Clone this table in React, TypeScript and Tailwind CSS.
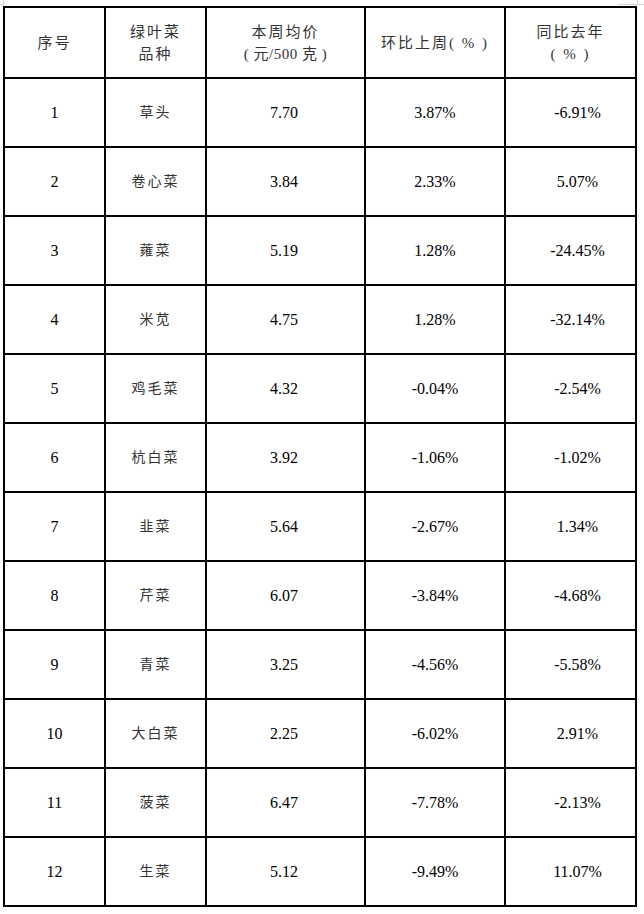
import React from 'react'

type Row = {
  no: string
  name: string
  price: string
  wow: string
  yoy: string
}

const rows: Row[] = [
  { no: '1', name: '草头', price: '7.70', wow: '3.87%', yoy: '-6.91%' },
  { no: '2', name: '卷心菜', price: '3.84', wow: '2.33%', yoy: '5.07%' },
  { no: '3', name: '蕹菜', price: '5.19', wow: '1.28%', yoy: '-24.45%' },
  { no: '4', name: '米苋', price: '4.75', wow: '1.28%', yoy: '-32.14%' },
  { no: '5', name: '鸡毛菜', price: '4.32', wow: '-0.04%', yoy: '-2.54%' },
  { no: '6', name: '杭白菜', price: '3.92', wow: '-1.06%', yoy: '-1.02%' },
  { no: '7', name: '韭菜', price: '5.64', wow: '-2.67%', yoy: '1.34%' },
  { no: '8', name: '芹菜', price: '6.07', wow: '-3.84%', yoy: '-4.68%' },
  { no: '9', name: '青菜', price: '3.25', wow: '-4.56%', yoy: '-5.58%' },
  { no: '10', name: '大白菜', price: '2.25', wow: '-6.02%', yoy: '2.91%' },
  { no: '11', name: '菠菜', price: '6.47', wow: '-7.78%', yoy: '-2.13%' },
  { no: '12', name: '生菜', price: '5.12', wow: '-9.49%', yoy: '11.07%' },
]

const cell = 'border-r-2 border-b-2 border-black flex items-center justify-center'
const cjk = "font-['Liberation_Serif','Noto_Sans_CJK_SC',serif] text-[14px] tracking-[2px] text-[#333]"
const num = "font-['Liberation_Serif','Noto_Sans_CJK_SC',serif] text-[16px] text-black"
const head = "font-['Liberation_Serif','Noto_Sans_CJK_SC',serif] text-[15px] leading-[22px] tracking-[2px] text-[#333] text-center whitespace-pre"

export default function App() {
  return (
    <div className="relative w-[644px] h-[914px] bg-white">
      {/* crop marks */}
      <div className="absolute left-[3px] top-0 w-px h-[5px] bg-gray-300" />
      <div className="absolute left-0 top-[4px] w-[3px] h-px bg-gray-300" />
      <div className="absolute left-[618px] top-[4px] w-[26px] h-px bg-gray-300" />
      <div className="absolute left-[637px] top-0 w-px h-[5px] bg-gray-300" />

      <div className="pl-[3px] pt-[6px]">
        <div className="w-[634px] border-l-2 border-t-2 border-black grid grid-cols-[101px_101px_159px_140px_131px]">
          {/* Header */}
          <div className={`${cell} h-[71px]`}>
            <div className={head}>序号</div>
          </div>
          <div className={`${cell} h-[71px]`}>
            <div className={head}>
              <div>绿叶菜</div>
              <div>品种</div>
            </div>
          </div>
          <div className={`${cell} h-[71px]`}>
            <div className={head}>
              <div>本周均价</div>
              <div className="tracking-[0.5px]">( 元/500 克 )</div>
            </div>
          </div>
          <div className={`${cell} h-[71px]`}>
            <div className={`${head} tracking-[1.5px]`}>环比上周( % )</div>
          </div>
          <div className={`${cell} h-[71px]`}>
            <div className={head}>
              <div>同比去年</div>
              <div>( % )</div>
            </div>
          </div>

          {rows.map(r => (
            <React.Fragment key={r.no}>
              <div className={`${cell} h-[69px]`}>
                <span className={num}>{r.no}</span>
              </div>
              <div className={`${cell} h-[69px]`}>
                <span className={cjk}>{r.name}</span>
              </div>
              <div className={`${cell} h-[69px] pr-[3px]`}>
                <span className={num}>{r.price}</span>
              </div>
              <div className={`${cell} h-[69px]`}>
                <span className={num}>{r.wow}</span>
              </div>
              <div className={`${cell} h-[69px] pl-[14px]`}>
                <span className={num}>{r.yoy}</span>
              </div>
            </React.Fragment>
          ))}
        </div>
      </div>
    </div>
  )
}
